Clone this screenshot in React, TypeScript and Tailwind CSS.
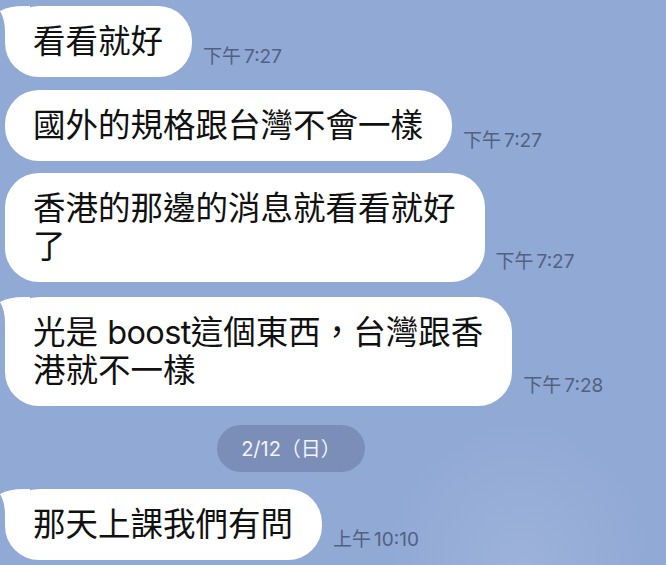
import type { ReactNode } from 'react'

type Msg = {
  id: number
  lines: ReactNode[]
  time: [string, string]
  tail?: boolean
  gap: string
}

const messages: Msg[] = [
  { id: 1, lines: ['看看就好'], time: ['下午', '7:27'], tail: true, gap: 'mt-[6px]' },
  { id: 2, lines: ['國外的規格跟台灣不會一樣'], time: ['下午', '7:27'], gap: 'mt-[13px]' },
  { id: 3, lines: ['香港的那邊的消息就看看就好', '了'], time: ['下午', '7:27'], gap: 'mt-[12px]' },
  {
    id: 4,
    lines: [
      <>
        光是 <span className="tracking-[-0.6px]">boost</span>這個東西，台灣跟香
      </>,
      '港就不一樣',
    ],
    time: ['下午', '7:28'],
    tail: true,
    gap: 'mt-[15px]',
  },
]

function Tail() {
  return (
    <svg className="absolute left-0 top-0" width="30" height="34" viewBox="0 0 30 34">
      <path d="M0 5 Q9 0 24 0 L30 0 L30 34 L5 34 L5 26 Q5 13 0 5 Z" fill="#ffffff" />
    </svg>
  )
}

function Time({ time }: { time: [string, string] }) {
  return (
    <span className="ml-[11px] mb-[10px] text-[19px] leading-[20px] text-[#52617f] whitespace-nowrap">
      {time[0]}
      <span className="ml-[3px]">{time[1]}</span>
    </span>
  )
}

function Bubble({ lines, time, tail, gap }: { lines: ReactNode[]; time: [string, string]; tail?: boolean; gap: string }) {
  return (
    <div className={`relative flex items-end pl-[5px] ${gap}`}>
      {tail && <Tail />}
      <div className="relative bg-white rounded-[34px] pl-[28px] pr-[29px] py-[16.5px] text-[32.5px] leading-[38px] text-[#111111] whitespace-nowrap">
        {lines.map((l, i) => (
          <div key={i}>{l}</div>
        ))}
      </div>
      <Time time={time} />
    </div>
  )
}

export default function App() {
  return (
    <div className="w-[666px] h-[565px] overflow-hidden bg-[#91a9d5] bg-[radial-gradient(ellipse_at_78%_100%,#9cb2da_0%,transparent_18%)] font-['Inter','Noto_Sans_CJK_TC',sans-serif] flex flex-col">
      {messages.map((m) => (
        <Bubble key={m.id} lines={m.lines} time={m.time} tail={m.tail} gap={m.gap} />
      ))}

      {/* date divider */}
      <div className="mt-[19px] ml-[217px] w-[148px] h-[47px] rounded-full bg-[#7b8eb8] flex items-center justify-center text-[20px] text-[#f1f4fa]">
        2/12（日）
      </div>

      <Bubble lines={['那天上課我們有問']} time={['上午', '10:10']} tail gap="mt-[17px]" />
    </div>
  )
}
